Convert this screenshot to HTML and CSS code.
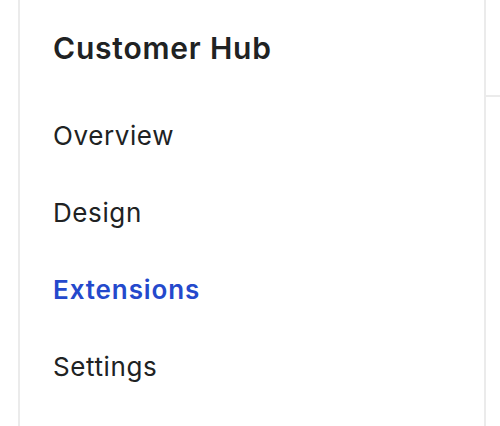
FILE: index.html
```html
<!DOCTYPE html>
<html lang="en">

<head>
    <meta charset="UTF-8">
    <meta name="viewport" content="width=device-width, initial-scale=1.0">
    <title>Customer Hub</title>
    <link rel="stylesheet" href="styles.css">
</head>

<body>

    <div class="layout">
        <nav class="sidebar">
            <h1 class="sidebar-title">Customer Hub</h1>
            <ul class="nav-list">
                <li><a class="nav-item" href="#">Overview</a></li>
                <li><a class="nav-item" href="#">Design</a></li>
                <li><a class="nav-item active" href="#">Extensions</a></li>
                <li><a class="nav-item" href="#">Settings</a></li>
            </ul>
        </nav>
        <div class="aside">
            <div class="aside-header"></div>
        </div>
    </div>

</body>

</html>
```

FILE: styles.css
```css
body {
    font-family: 'Inter', 'Noto Sans', sans-serif;
    margin: 0;
    padding: 0;
    background-color: #fff;
    color: #202223;
}

.layout {
    display: flex;
    min-height: 100vh;
    padding-left: 18px;
}

.sidebar {
    width: 468px;
    border-left: 2px solid #ebebeb;
    border-right: 2px solid #ebebeb;
    padding: 0 33px;
    box-sizing: border-box;
}

.sidebar-title {
    margin: 0;
    padding-top: 30px;
    font-size: 30px;
    font-weight: 600;
    line-height: 36px;
    letter-spacing: 0.8px;
}

.nav-list {
    list-style: none;
    margin: 0;
    padding: 0;
    margin-top: 54px;
}

.nav-item {
    display: block;
    font-size: 26px;
    line-height: 32px;
    padding: 0 0 45px;
    color: #202223;
    text-decoration: none;
    letter-spacing: 0.6px;
}

.nav-item.active {
    color: #2449cc;
    font-weight: 600;
    letter-spacing: 0.9px;
}

.aside {
    flex: 1;
}

.aside-header {
    height: 95px;
    border-bottom: 2px solid #ebebeb;
}
```
